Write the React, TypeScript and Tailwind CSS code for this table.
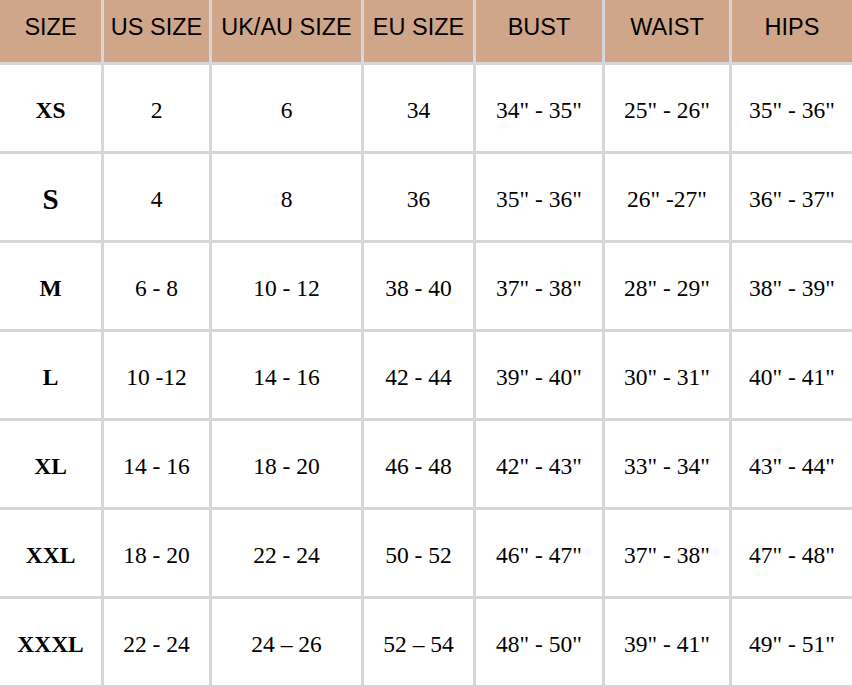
const headers = ["SIZE", "US SIZE", "UK/AU SIZE", "EU SIZE", "BUST", "WAIST", "HIPS"];

const rows: { size: string; big?: boolean; cells: string[] }[] = [
  { size: "XS", cells: ["2", "6", "34", '34" - 35"', '25" - 26"', '35" - 36"'] },
  { size: "S", big: true, cells: ["4", "8", "36", '35" - 36"', '26" -27"', '36" - 37"'] },
  { size: "M", cells: ["6 - 8", "10 - 12", "38 - 40", '37" - 38"', '28" - 29"', '38" - 39"'] },
  { size: "L", cells: ["10 -12", "14 - 16", "42 - 44", '39" - 40"', '30" - 31"', '40" - 41"'] },
  { size: "XL", cells: ["14 - 16", "18 - 20", "46 - 48", '42" - 43"', '33" - 34"', '43" - 44"'] },
  { size: "XXL", cells: ["18 - 20", "22 - 24", "50 - 52", '46" - 47"', '37" - 38"', '47" - 48"'] },
  { size: "XXXL", cells: ["22 - 24", "24 – 26", "52 – 54", '48" - 50"', '39" - 41"', '49" - 51"'] },
];

export default function App() {
  return (
    <div className="w-[852px] bg-white">
      <div className="grid grid-cols-[101px_105px_149px_109px_126px_124px_120px] grid-rows-[62px_repeat(7,86px)] gap-[3px] bg-[#d6d6d6] pb-[2px]">
        {headers.map((h) => (
          <div
            key={h}
            className="bg-[#cfa689] flex items-center justify-center pb-[7px] text-[23.5px] text-black font-['Liberation_Sans',Arial,sans-serif] whitespace-nowrap"
          >
            {h}
          </div>
        ))}

        {rows.map((row) => (
          <div key={row.size} className="contents">
            <div
              className={
                "bg-white flex items-center justify-center pt-[6px] font-bold text-black font-['Liberation_Serif','Times_New_Roman',serif] " +
                (row.big ? "text-[29px]" : "text-[23.5px]")
              }
            >
              {row.size}
            </div>
            {row.cells.map((c, i) => (
              <div
                key={i}
                className="bg-white flex items-center justify-center pt-[6px] text-[23.5px] text-black font-['Liberation_Serif','Times_New_Roman',serif] whitespace-nowrap"
              >
                {c}
              </div>
            ))}
          </div>
        ))}
      </div>
    </div>
  );
}
